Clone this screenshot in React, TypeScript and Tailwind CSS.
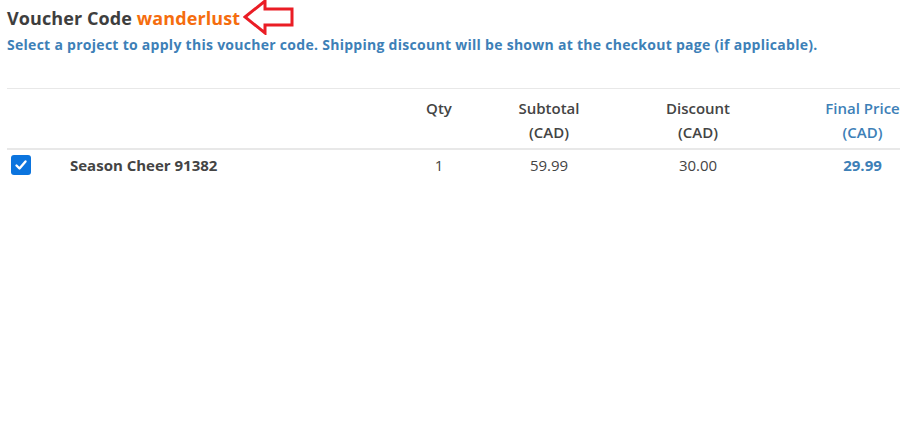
const font = { fontFamily: '"Open Sans", "Liberation Sans", sans-serif' }

function CheckBox() {
  return (
    <span className="inline-flex items-center justify-center w-5 h-5 rounded-[3px] bg-[#0b74de]">
      <svg width="14" height="14" viewBox="0 0 14 14" fill="none">
        <path d="M2.5 7.5 L5.5 10.5 L11.5 3.5" stroke="white" strokeWidth="2.4" strokeLinecap="round" strokeLinejoin="round" />
      </svg>
    </span>
  )
}

function RedArrow() {
  return (
    <svg width="52" height="36" viewBox="0 0 52 36" className="shrink-0 -mt-[2px] ml-[3px]">
      <polygon
        points="2,18 22,2 22,10 49,10 49,26 22,26 22,34"
        fill="none"
        stroke="#ea1d25"
        strokeWidth="3"
        strokeLinejoin="miter"
      />
    </svg>
  )
}

export default function App() {
  return (
    <div className="w-[900px] h-[436px] bg-white overflow-hidden" style={font}>
      <div className="pl-[7px] pt-[6px]">
        <div className="flex items-center h-[24px]">
          <h2 className="text-[18px] leading-[24px] font-bold text-[#3e3e3e] tracking-[0.1px]">
            Voucher Code <span className="text-[#f56d0e]">wanderlust</span>
          </h2>
          <RedArrow />
        </div>
        <p className="mt-[5px] text-[14px] leading-[20px] font-bold text-[#3d80b7] tracking-[0.28px]">
          Select a project to apply this voucher code. Shipping discount will be shown at the checkout page (if applicable).
        </p>
      </div>

      <div className="ml-[7px] mt-[33px] w-[893px] border-t border-[#e8e8e8]">
        {/* header */}
        <div className="flex items-start pt-[7px] pb-[4px] border-b-2 border-[#e8e8e8] text-[15px] leading-[24px] font-semibold text-[#444]">
          <div className="w-[56px]" />
          <div className="w-[346px]" />
          <div className="w-[60px] text-center">Qty</div>
          <div className="w-[160px] text-center">
            Subtotal
            <br />
            (CAD)
          </div>
          <div className="w-[138px] text-center">
            Discount
            <br />
            (CAD)
          </div>
          <div className="w-[133px] pl-[58px] text-center text-[#3d80b7] whitespace-nowrap">
            Final Price
            <br />
            (CAD)
          </div>
        </div>

        {/* row */}
        <div className="flex items-center pt-[5px] pb-[10px] text-[15px] leading-[20px] text-[#444]">
          <div className="w-[56px] pl-[4px] flex items-center">
            <CheckBox />
          </div>
          <div className="w-[346px] pl-[7px] font-bold">Season Cheer 91382</div>
          <div className="w-[60px] text-center">1</div>
          <div className="w-[160px] text-center">59.99</div>
          <div className="w-[138px] text-center">30.00</div>
          <div className="w-[133px] pl-[58px] text-center font-bold text-[#3d80b7]">29.99</div>
        </div>
      </div>
    </div>
  )
}
